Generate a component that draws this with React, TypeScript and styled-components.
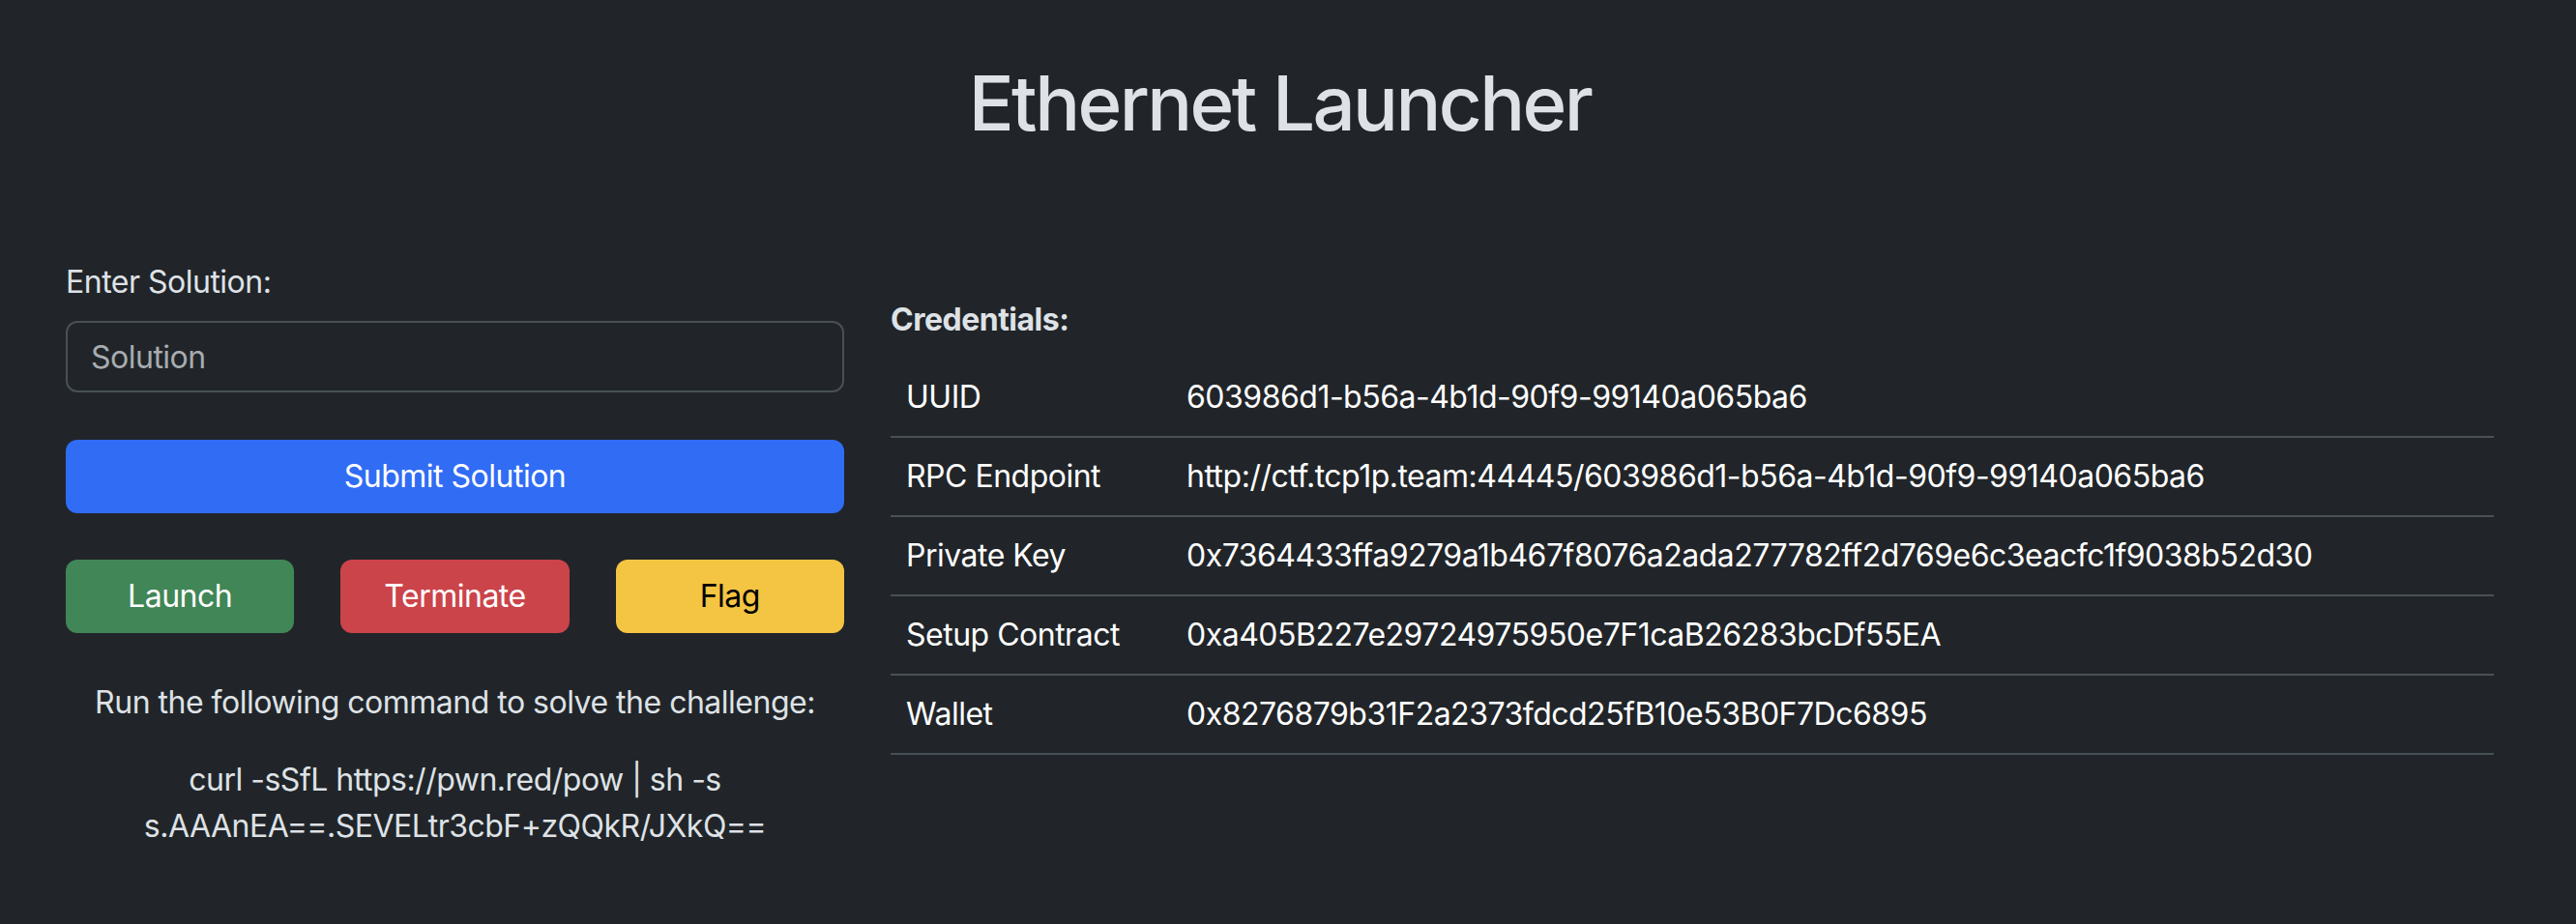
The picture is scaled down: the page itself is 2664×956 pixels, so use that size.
import styled, { createGlobalStyle } from "styled-components";

const GlobalStyle = createGlobalStyle`
  html, body {
    margin: 0;
    background: #212529;
  }
  body {
    font-family: Inter, "Noto Sans", "Liberation Sans", sans-serif;
    font-size: 32px;
    line-height: 1.5;
    letter-spacing: -0.5px;
    color: #dee2e6;
  }
  * {
    box-sizing: border-box;
  }
`

const Page = styled.div`
  padding: 59px 61px 40px 44px;
`

// Inter runs wider than the system font in the screenshot, so tighten it
const Title = styled.h1`
  margin: 0;
  font-size: 78px;
  font-weight: 500;
  line-height: 96px;
  letter-spacing: -2.6px;
  text-align: center;
  color: #dee2e6;
`

const Main = styled.div`
  display: grid;
  grid-template-columns: 805px 1658px;
  column-gap: 48px;
  padding: 0 24px;
  margin-top: 113px;
  align-items: start;
`

const Column = styled.div<{ $offset?: number }>`
  display: flex;
  flex-direction: column;
  padding-top: ${(p) => p.$offset ?? 0}px;
`

const Label = styled.label`
  display: block;
  margin-bottom: 16px;
`

const Input = styled.input`
  height: 74px;
  width: 100%;
  padding: 0 24px;
  border: 2px solid #495057;
  border-radius: 12px;
  background: #212529;
  color: #dee2e6;
  font: inherit;
  letter-spacing: inherit;
  outline: none;

  &::placeholder {
    color: rgba(222, 226, 230, 0.72);
  }
`

// colours taken from the screenshot rather than bootstrap's
const variants = {
  primary: { bg: "#316cf4", fg: "#ffffff" },
  success: { bg: "#418657", fg: "#ffffff" },
  danger: { bg: "#cb444a", fg: "#ffffff" },
  warning: { bg: "#f4c443", fg: "#000000" },
}

const Button = styled.button<{ $variant: keyof typeof variants }>`
  height: 76px;
  width: 100%;
  border: none;
  border-radius: 12px;
  font: inherit;
  letter-spacing: inherit;
  background: ${(p) => variants[p.$variant].bg};
  color: ${(p) => variants[p.$variant].fg};
  cursor: pointer;
`

const SubmitWrap = styled.div`
  margin-top: 49px;
`

const ButtonRow = styled.div`
  display: grid;
  grid-template-columns: repeat(3, 1fr);
  gap: 48px;
  margin-top: 48px;
`

const Instructions = styled.div`
  margin-top: 48px;
  text-align: center;

  p {
    margin: 0 0 32px;
  }
`

const Heading = styled.div`
  font-weight: 700;
  margin-bottom: 16px;
`

const Table = styled.table`
  width: 100%;
  border-collapse: collapse;
  table-layout: fixed;
  color: #ffffff;
`

const KeyCol = styled.col`
  width: 290px;
`

const Cell = styled.td`
  padding: 16px;
  border-bottom: 2px solid #495057;
  white-space: nowrap;
`

const credentials = [
  ["UUID", "603986d1-b56a-4b1d-90f9-99140a065ba6"],
  ["RPC Endpoint", "http://ctf.tcp1p.team:44445/603986d1-b56a-4b1d-90f9-99140a065ba6"],
  ["Private Key", "0x7364433ffa9279a1b467f8076a2ada277782ff2d769e6c3eacfc1f9038b52d30"],
  ["Setup Contract", "0xa405B227e29724975950e7F1caB26283bcDf55EA"],
  ["Wallet", "0x8276879b31F2a2373fdcd25fB10e53B0F7Dc6895"],
]

const App = () => {
  return (
    <Page>
      <GlobalStyle />
      <Title>Ethernet Launcher</Title>
      <Main>
        <Column>
          <Label htmlFor="solution">Enter Solution:</Label>
          <Input id="solution" placeholder="Solution" />
          <SubmitWrap>
            <Button $variant="primary">Submit Solution</Button>
          </SubmitWrap>
          <ButtonRow>
            <Button $variant="success">Launch</Button>
            <Button $variant="danger">Terminate</Button>
            <Button $variant="warning">Flag</Button>
          </ButtonRow>
          <Instructions>
            <p>Run the following command to solve the challenge:</p>
            <p>curl -sSfL https://pwn.red/pow | sh -s s.AAAnEA==.SEVELtr3cbF+zQQkR/JXkQ==</p>
          </Instructions>
        </Column>
        <Column $offset={39}>
          <Heading>Credentials:</Heading>
          <Table>
            <colgroup>
              <KeyCol />
              <col />
            </colgroup>
            <tbody>
              {credentials.map(([key, value]) => (
                <tr key={key}>
                  <Cell>{key}</Cell>
                  <Cell>{value}</Cell>
                </tr>
              ))}
            </tbody>
          </Table>
        </Column>
      </Main>
    </Page>
  )
}

export default App;
